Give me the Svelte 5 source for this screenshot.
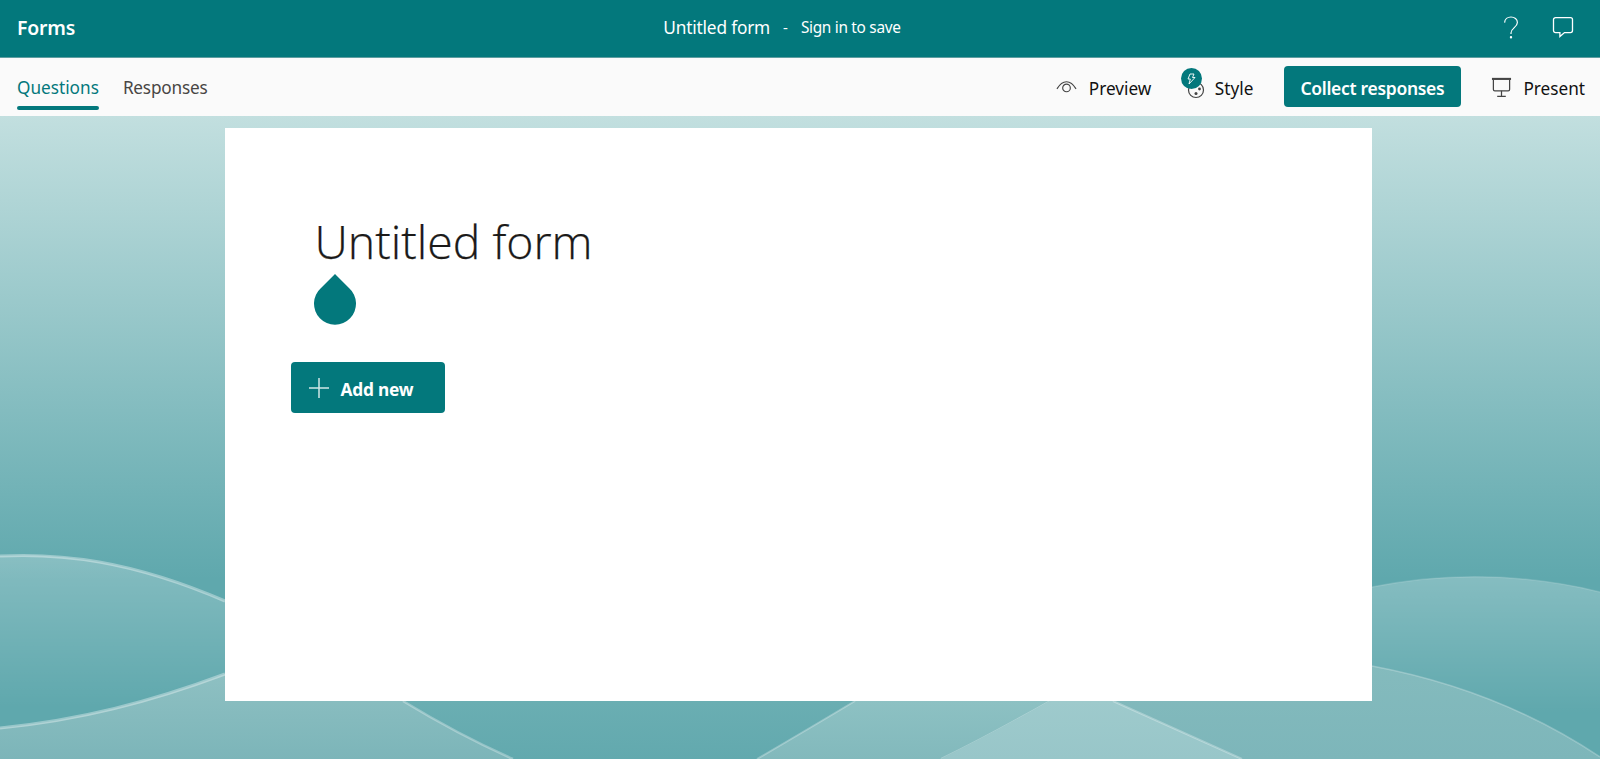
<script>
  const tabs = [
    { label: 'Questions', active: true },
    { label: 'Responses', active: false }
  ];
</script>

<div class="page">
  <header class="top">
    <div class="brand">Forms</div>
    <div class="title"><span class="name">Untitled form</span><span class="dash">-</span><span class="save">Sign in to save</span></div>
    <div class="top-icons">
      <svg width="24" height="24" viewBox="0 0 24 24" fill="none" stroke="#fff" stroke-width="1.2">
        <path d="M5.600 7.600C5.800 4.200 8.600 2 12 2c3.500 0 6.400 2.300 6.400 5.500 0 4.800-6.400 5.500-6.400 10.500v1" />
        <circle cx="12" cy="22.300" r="0.600" fill="#fff" />
      </svg>
      <svg width="24" height="24" viewBox="0 0 24 24" fill="none" stroke="#fff" stroke-width="1.300">
        <path d="M4.500 2.600h15a2 2 0 0 1 2 2v11a2 2 0 0 1-2 2h-6l-4.600 4v-4H4.500a2 2 0 0 1-2-2v-11a2 2 0 0 1 2-2z" />
      </svg>
    </div>
  </header>

  <nav class="sub">
    <div class="tabs">
      {#each tabs as t}
        <div class="tab" class:active={t.active}>{t.label}</div>
      {/each}
    </div>
    <div class="actions">
      <div class="act preview">
        <svg width="21" height="14" viewBox="0 0 22 14" fill="none" stroke="#444" stroke-width="1.200">
          <path d="M1 9C4 4 7 1.500 11 1.500s7 2.500 10 7.500" />
          <circle cx="11" cy="8" r="4" />
        </svg>
        <span>Preview</span>
      </div>
      <div class="act style">
        <span class="palette">
          <svg class="pal" width="18" height="18" viewBox="0 0 18 18" fill="none" stroke="#444" stroke-width="1.200">
            <circle cx="9" cy="9" r="7.500" />
            <circle cx="9" cy="12.500" r="1.500" fill="#444" stroke="none" />
            <circle cx="12.500" cy="8" r="1.400" fill="#444" stroke="none" />
          </svg>
          <span class="bolt">
            <svg width="12" height="12" viewBox="0 0 12 12" fill="none" stroke="#fff" stroke-width="0.900">
              <path d="M5 1h4L7.500 4.500H10L4 11l1.300-5H3z" />
            </svg>
          </span>
        </span>
        <span>Style</span>
      </div>
      <button class="collect"><span>Collect responses</span></button>
      <div class="act present">
        <svg width="21" height="21" viewBox="0 0 22 22" fill="none" stroke="#444" stroke-width="1.300">
          <path d="M1 2h20" stroke-width="2.200" />
          <path d="M2.500 3v10a1.500 1.500 0 0 0 1.500 1.500h14a1.500 1.500 0 0 0 1.500-1.500V3" />
          <path d="M11 14.500V20M6.500 20.300h9" />
        </svg>
        <span>Present</span>
      </div>
    </div>
  </nav>

  <main class="stage">
    <svg class="waves" viewBox="0 116 1600 643" preserveAspectRatio="none" aria-hidden="true">
      <defs>
        <linearGradient id="sky" x1="0" y1="0" x2="0" y2="1">
          <stop offset="0" stop-color="#c2dfdf" />
          <stop offset="0.72" stop-color="#5fa8ad" />
          <stop offset="1" stop-color="#5fa8ad" />
        </linearGradient>
        <linearGradient id="wash" x1="0" y1="0" x2="0" y2="1">
          <stop offset="0" stop-color="#fff" stop-opacity="0.24" />
          <stop offset="0.75" stop-color="#fff" stop-opacity="0" />
        </linearGradient>
        <linearGradient id="mid" x1="0" y1="0" x2="0" y2="1">
          <stop offset="0" stop-color="#6cafb3" />
          <stop offset="1" stop-color="#62a9ae" />
        </linearGradient>
        <linearGradient id="low" x1="0" y1="0" x2="0" y2="1">
          <stop offset="0" stop-color="#8ec0c2" />
          <stop offset="1" stop-color="#7cb5b9" />
        </linearGradient>
        <linearGradient id="lowr" x1="0" y1="0" x2="0" y2="1">
          <stop offset="0" stop-color="#86bcbe" />
          <stop offset="1" stop-color="#7db6ba" />
        </linearGradient>
        <linearGradient id="cen" x1="0" y1="0" x2="0" y2="1">
          <stop offset="0" stop-color="#8dc1c3" />
          <stop offset="1" stop-color="#82b9bc" />
        </linearGradient>
        <linearGradient id="peak" x1="0" y1="0" x2="0" y2="1">
          <stop offset="0" stop-color="#9ecacc" />
          <stop offset="1" stop-color="#98c6c9" />
        </linearGradient>
      </defs>
      <rect x="0" y="116" width="1600" height="643" fill="url(#sky)" />
      <rect x="400" y="690" width="800" height="69" fill="url(#mid)" />
      <path d="M0 556C60 553 130 560 225 601L403 700L513 759H0Z" fill="url(#wash)" />
      <path d="M0 556C60 553 130 560 225 601" fill="none" stroke="#fff" stroke-opacity="0.36" stroke-width="3" />
      <path d="M0 728C80 720 150 702 225 674L403 690V701Q459 735 513 759H0Z" fill="url(#low)" />
      <path d="M0 728C80 720 150 702 225 674" fill="none" stroke="#fff" stroke-opacity="0.36" stroke-width="3" />
      <path d="M403 701Q459 735 513 759" fill="none" stroke="#fff" stroke-opacity="0.3" stroke-width="2.500" />
      <path d="M1372 587C1440 573 1520 572 1600 592V759H1372Z" fill="url(#wash)" />
      <path d="M1372 587C1440 573 1520 572 1600 592" fill="none" stroke="#fff" stroke-opacity="0.14" stroke-width="1.500" />
      <path d="M1113 701V640L1372 666Q1500 690 1600 757V759H1242Z" fill="url(#lowr)" />
      <path d="M1372 666Q1500 690 1600 757" fill="none" stroke="#fff" stroke-opacity="0.25" stroke-width="1.500" />
      <path d="M855 701H1050Q990 735 941 759H757Q810 728 855 701Z" fill="url(#cen)" />
      <path d="M855 701Q810 728 757 759M1050 701Q990 735 941 759" fill="none" stroke="#fff" stroke-opacity="0.28" stroke-width="2" />
      <path d="M1050 701H1113L1242 759H941Q990 735 1050 701Z" fill="url(#peak)" />
      <path d="M1113 701L1242 759" fill="none" stroke="#fff" stroke-opacity="0.3" stroke-width="2" />
    </svg>

    <section class="card">
      <h1>Untitled form</h1>
      <svg class="drop" width="42" height="51" viewBox="0 0 42 51">
        <path d="M21 0L35 14A21 21 0 1 1 7 14Z" fill="#03787c" />
      </svg>
      <button class="add">
        <svg width="20" height="20" viewBox="0 0 20 20" stroke="#cfe6e6" stroke-width="1.500"><path d="M10 0v20M0 10h20" /></svg>
        <span>Add new</span>
      </button>
    </section>
  </main>
</div>

<style>
  :global(body) { margin: 0; }
  .page {
    width: 1600px;
    height: 759px;
    display: flex;
    flex-direction: column;
    overflow: hidden;
    font-family: "Noto Sans", "Open Sans", sans-serif;
    color: #111;
  }
  .top {
    height: 57px;
    flex: none;
    box-sizing: content-box;
    background: #03787c;
    color: #fff;
    display: grid;
    grid-template-columns: 1fr auto 1fr;
    align-items: center;
    padding: 0 17px;
    border-bottom: 1px solid #5f9ea1;
  }
  .brand { font-size: 19.400px; font-weight: 600; letter-spacing: -0.2px; padding-bottom: 3px; }
  .title { display: flex; align-items: center; transform: translateX(-18px); padding-bottom: 3px; }
  .name { font-size: 17.300px; letter-spacing: -0.2px; }
  .dash { margin: 0 13px; font-size: 15px; }
  .save { font-size: 15.400px; letter-spacing: -0.3px; }
  .top-icons { justify-self: end; display: flex; gap: 28px; padding-right: 8px; padding-bottom: 3px; }
  .sub {
    height: 58px;
    flex: none;
    background: #fafafa;
    display: flex;
    justify-content: space-between;
    padding: 0 15px 0 17px;
    align-items: center;
  }
  .tabs { display: flex; gap: 24px; height: 100%; }
  .tab {
    font-size: 17.200px;
    color: #484644;
    display: flex;
    align-items: center;
    position: relative;
  }
  .tab + .tab { letter-spacing: -0.2px; }
  .tab.active { color: #03787c; }
  .tab.active::after {
    content: "";
    position: absolute;
    left: 0;
    right: 0;
    bottom: 6px;
    height: 4px;
    border-radius: 2px;
    background: #03787c;
  }
  .actions { display: flex; align-items: center; }
  .act { display: flex; align-items: center; font-size: 17.200px; color: #111; }
  .act > span:last-child { padding-top: 2px; }
  .preview { gap: 11.500px; margin-right: 29.500px; }
  .style { gap: 10px; margin-right: 30.500px; }
  .palette { position: relative; width: 24px; height: 24px; display: block; }
  .pal { position: absolute; left: 6.500px; top: 5.500px; }
  .bolt {
    position: absolute;
    left: 0;
    top: -7px;
    width: 21px;
    height: 21px;
    border-radius: 50%;
    background: #03787c;
    display: flex;
    align-items: center;
    justify-content: center;
  }
  .collect {
    height: 41px;
    width: 177px;
    border: none;
    border-radius: 4px;
    padding: 2px 0 0;
    background: #03787c;
    color: #fff;
    font-family: inherit;
    font-size: 17.500px;
    font-weight: 600;
    letter-spacing: -0.3px;
    margin-right: 30.500px;
    margin-bottom: 1px;
    white-space: nowrap;
  }
  .present { gap: 11px; }
  .stage {
    flex: 1;
    position: relative;
    display: flex;
    justify-content: center;
    align-items: flex-start;
    padding-top: 12px;
  }
  .waves { position: absolute; inset: 0; width: 100%; height: 100%; }
  .card {
    position: relative;
    width: 1147px;
    height: 573px;
    background: #fff;
    padding: 85px 0 0 66px;
    box-sizing: border-box;
    margin-right: 4px;
  }
  h1 {
    margin: 0 0 0 24px;
    font-size: 46.400px;
    font-weight: 300;
    line-height: 56px;
    color: #1b1a19;
    -webkit-text-stroke: 0.25px #1b1a19;
    font-family: "Open Sans", "Noto Sans", sans-serif;
  }
  .drop { display: block; margin: 5px 0 0 23px; }
  .add {
    display: flex;
    align-items: center;
    gap: 12px;
    width: 154px;
    height: 51px;
    margin-top: 37px;
    padding: 0 0 0 18px;
    border: none;
    border-radius: 4px;
    background: #03787c;
    color: #fff;
    font-family: inherit;
    font-size: 17.300px;
    font-weight: 700;
    letter-spacing: -0.2px;
  }
  .add span { padding-top: 3px; }
</style>
